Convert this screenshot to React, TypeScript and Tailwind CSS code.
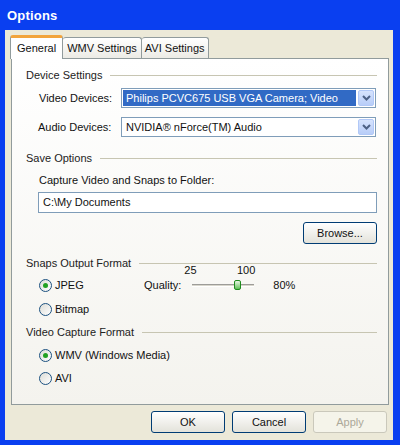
import React from 'react';

const font = { fontFamily: '"Liberation Sans", Arial, sans-serif' };

const SectionHeader: React.FC<{ title: string }> = ({ title }) => (
  <div className="flex items-center h-[14px]">
    <span className="text-[#222] whitespace-nowrap">{title}</span>
    <div className="flex-1 ml-2 h-px bg-[#c7c5b2]"></div>
  </div>
);

const Radio: React.FC<{ label: string; checked?: boolean }> = ({ label, checked }) => (
  <div className="flex items-center h-[14px]">
    <div className="w-[13px] h-[13px] rounded-full border border-[#1c5180] bg-gradient-to-br from-[#dcdcd6] to-white flex items-center justify-center">
      {checked && <div className="w-[5px] h-[5px] rounded-full bg-[#21a121]"></div>}
    </div>
    <span className="ml-[3px] text-[#111]">{label}</span>
  </div>
);

const Chevron: React.FC = () => (
  <svg width="9" height="6" viewBox="0 0 9 6">
    <path d="M1 1 L4.5 4.5 L8 1" fill="none" stroke="#4d6185" strokeWidth="2" />
  </svg>
);

const Select: React.FC<{ value: string; selected?: boolean }> = ({ value, selected }) => (
  <div className="w-[255px] h-[20px] border border-[#7f9db9] bg-white flex items-stretch p-px">
    <div className={`flex-1 flex items-center px-[3px] ${selected ? 'bg-[#316ac5] text-white' : 'text-[#111]'}`}>
      {value}
    </div>
    <div className="w-[16px] ml-[2px] rounded-[2px] bg-gradient-to-b from-[#d6e3fd] to-[#b8cdf8] border border-[#b1c8f7] flex items-center justify-center">
      <Chevron />
    </div>
  </div>
);

const XpButton: React.FC<{ label: string; disabled?: boolean }> = ({ label, disabled }) => (
  <div
    className={`w-[74px] h-[22px] rounded-[3px] flex items-center justify-center border ${
      disabled
        ? 'border-[#cac8bb] bg-[#f5f4ea] text-[#aca899]'
        : 'border-[#003c74] bg-gradient-to-b from-white to-[#e3e2da] text-[#111]'
    }`}
  >
    {label}
  </div>
);

export default function App() {
  return (
    <div className="w-[400px] h-[445px] bg-[#0a3ff0] flex flex-col text-[11px] select-none" style={font}>
      {/* Title bar */}
      <div className="h-[30px] flex items-center pl-[7px] pt-[2px]">
        <span className="text-white font-bold text-[13px] tracking-[0.2px]">Options</span>
      </div>

      {/* Window body */}
      <div className="flex-1 ml-[5px] mr-[7px] mb-[5px] bg-[#ece9d8] flex flex-col pt-[5px] pl-[5px] pr-[4px]">
        {/* Tabs */}
        <div className="flex items-end h-[23px] relative z-10">
          <div className="h-[24px] -mb-px px-[6px] flex items-center bg-white border border-b-0 border-[#919b9c] rounded-t-[3px] border-t-[3px] border-t-[#f2a43c] text-[#111]">
            General
          </div>
          <div className="h-[21px] px-[4px] flex items-center bg-gradient-to-b from-white to-[#ecebe5] border border-b-0 border-l-0 border-[#919b9c] rounded-t-[3px] text-[#111]">
            WMV Settings
          </div>
          <div className="h-[21px] px-[3px] flex items-center bg-gradient-to-b from-white to-[#ecebe5] border border-b-0 border-l-0 border-[#919b9c] rounded-t-[3px] text-[#111]">
            AVI Settings
          </div>
        </div>

        {/* Tab panel */}
        <div className="ml-px h-[347px] border border-[#919b9c] bg-gradient-to-b from-white to-[#f4f3ee] pl-[14px] pr-[11px] pt-[9px] flex flex-col text-[#111]">
          <SectionHeader title="Device Settings" />
          <div className="mt-[6px] flex items-center">
            <span className="ml-[13px] w-[82px]">Video Devices:</span>
            <Select value="Philips PCVC675 USB VGA Camera; Video" selected />
          </div>
          <div className="mt-[9px] flex items-center">
            <span className="ml-[12px] w-[83px]">Audio Devices:</span>
            <Select value="NVIDIA® nForce(TM) Audio" />
          </div>

          <div className="mt-[14px]">
            <SectionHeader title="Save Options" />
          </div>
          <div className="mt-[8px] ml-[13px] h-[14px] flex items-center">Capture Video and Snaps to Folder:</div>
          <div className="mt-[5px] ml-[12px] h-[21px] border border-[#7f9db9] bg-white flex items-center px-[4px]">
            C:\My Documents
          </div>
          <div className="mt-[9px] flex justify-end">
            <XpButton label="Browse..." />
          </div>

          <div className="mt-[12px]">
            <SectionHeader title="Snaps Output Format" />
          </div>
          <div className="flex">
            <div className="ml-[13px] w-[105px] flex flex-col">
              <div className="mt-[8px]">
                <Radio label="JPEG" checked />
              </div>
              <div className="mt-[10px]">
                <Radio label="Bitmap" />
              </div>
            </div>
            <div className="flex items-start mt-[8px]">
              <span className="h-[14px] flex items-center">Quality:</span>
              <div className="ml-[11px] w-[62px] flex flex-col -mt-[15px]">
                <div className="flex justify-between h-[14px] items-center">
                  <span className="-ml-[8px]">25</span>
                  <span className="-mr-[1px]">100</span>
                </div>
                <div className="mt-px h-[14px] flex items-center relative">
                  <div className="w-full h-[3px] border-t border-[#9d9c99] border-b border-b-white bg-[#d8d6cc]"></div>
                  <div className="absolute left-[42px] top-[2px] w-[7px] h-[10px] rounded-[2px] border border-[#1e8b1e] bg-gradient-to-b from-[#e9f6e6] to-[#5cbf54]"></div>
                </div>
              </div>
              <span className="ml-[19px] h-[14px] flex items-center">80%</span>
            </div>
          </div>

          <div className="mt-[9px]">
            <SectionHeader title="Video Capture Format" />
          </div>
          <div className="ml-[13px] mt-[9px]">
            <Radio label="WMV (Windows Media)" checked />
          </div>
          <div className="ml-[13px] mt-[9px]">
            <Radio label="AVI" />
          </div>
        </div>

        {/* Dialog buttons */}
        <div className="mt-[6px] flex justify-end gap-[7px] pr-[2px]">
          <XpButton label="OK" />
          <XpButton label="Cancel" />
          <XpButton label="Apply" disabled />
        </div>
      </div>
    </div>
  );
}
